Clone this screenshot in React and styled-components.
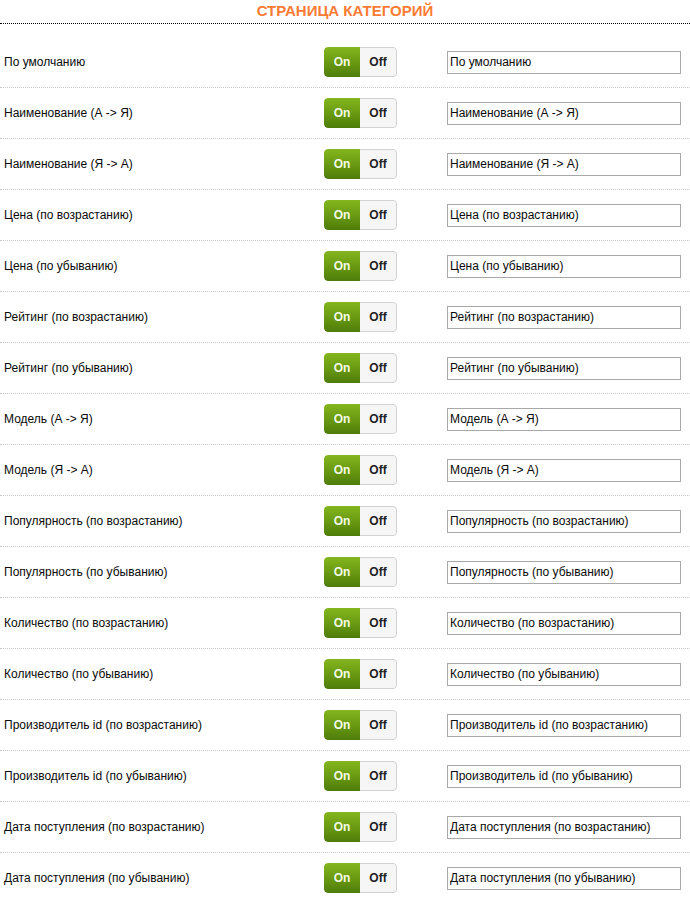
import styled, { createGlobalStyle } from "styled-components";

const GlobalStyle = createGlobalStyle`
  html, body {
    margin: 0;
    padding: 0;
    background: #fff;
  }
  body {
    font-family: "Liberation Sans", Arial, sans-serif;
    font-size: 12px;
    color: #111;
  }
`;

const sorts = [
  "По умолчанию",
  "Наименование (А -> Я)",
  "Наименование (Я -> А)",
  "Цена (по возрастанию)",
  "Цена (по убыванию)",
  "Рейтинг (по возрастанию)",
  "Рейтинг (по убыванию)",
  "Модель (А -> Я)",
  "Модель (Я -> А)",
  "Популярность (по возрастанию)",
  "Популярность (по убыванию)",
  "Количество (по возрастанию)",
  "Количество (по убыванию)",
  "Производитель id (по возрастанию)",
  "Производитель id (по убыванию)",
  "Дата поступления (по возрастанию)",
  "Дата поступления (по убыванию)",
];

function Toggle({ on = true }) {
  return (
    <Switch>
      <Half $active={on} $side="left">On</Half>
      <Half $active={!on} $side="right">Off</Half>
    </Switch>
  );
}

export default function App() {
  return (
    <Page>
      <GlobalStyle />
      <Title>СТРАНИЦА КАТЕГОРИЙ</Title>
      <List>
        {sorts.map((name) => (
          <Row key={name}>
            <Label>{name}</Label>
            <Toggle on />
            <Field defaultValue={name} />
          </Row>
        ))}
      </List>
    </Page>
  );
}

const Page = styled.div`
  width: 690px;
`;

const Title = styled.h2`
  margin: 0;
  height: 23px;
  line-height: 22px;
  text-align: center;
  font-size: 15px;
  font-weight: bold;
  color: #fb7b34;
  border-bottom: 1px dotted #000;
`;

const List = styled.div`
  margin-top: 13px;
`;

const Row = styled.div`
  display: grid;
  grid-template-columns: 320px 123px 234px;
  align-items: center;
  height: 50px;
  padding-left: 4px;
  border-bottom: 1px dotted #c8c8c8;
`;

const Label = styled.span`
  font-size: 12px;
  color: #0a0a0a;
`;

const Switch = styled.div`
  display: flex;
  width: 73px;
  height: 30px;
  border-radius: 4px;
  overflow: hidden;
  box-sizing: border-box;
`;

const Half = styled.span`
  flex: 1;
  display: flex;
  align-items: center;
  justify-content: center;
  font-size: 12px;
  font-weight: bold;
  box-sizing: border-box;
  color: ${(p) => (p.$active && p.$side === "left" ? "#f4fbe4" : "#222")};
  background: ${(p) =>
    p.$active && p.$side === "left"
      ? "linear-gradient(to bottom, #84b61e 0%, #6a9a12 50%, #4e7c0a 100%)"
      : "#f6f6f6"};
  border: ${(p) => (p.$side === "right" ? "1px solid #d2d2d2" : "none")};
  border-left: none;
  border-radius: ${(p) => (p.$side === "right" ? "0 4px 4px 0" : "4px 0 0 4px")};
`;

const Field = styled.input`
  width: 234px;
  height: 23px;
  box-sizing: border-box;
  border: 1px solid #a8a8a8;
  padding: 0 2px;
  font-family: "Liberation Sans", Arial, sans-serif;
  font-size: 12px;
  color: #0a0a0a;
  background: #fff;
  outline: none;
`;
